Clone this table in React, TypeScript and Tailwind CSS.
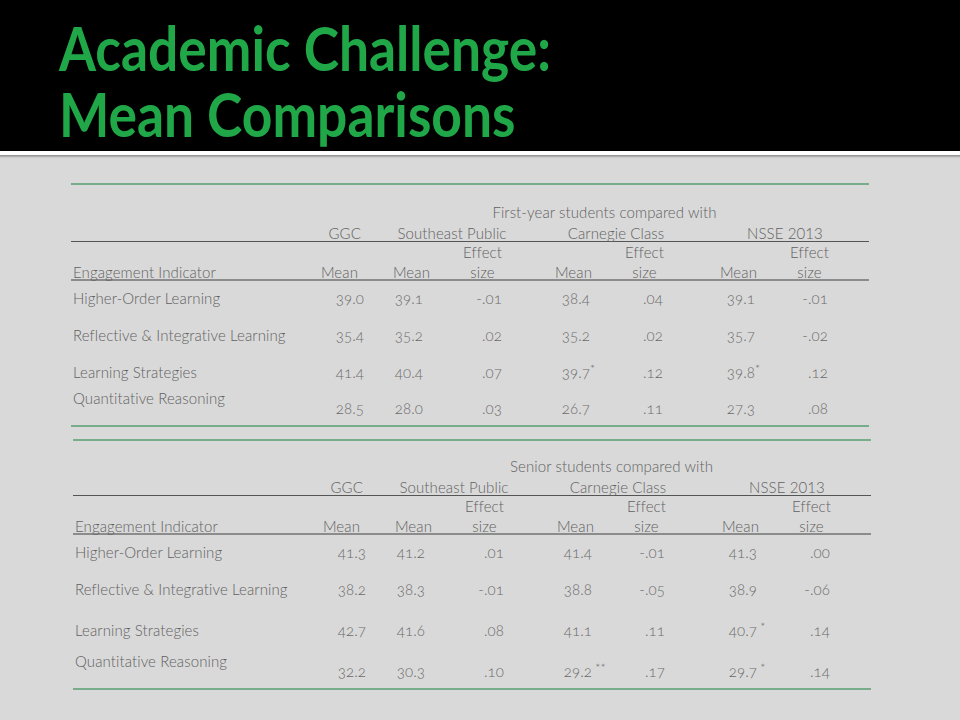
type Cell = { v: string; star?: string }

type Row = { label: string; cells: Cell[]; rowClass: string; split?: boolean }

const t1Rows: Row[] = [
  {
    label: "Higher-Order Learning",
    rowClass: "mt-[7px]",
    cells: [{ v: "39.0" }, { v: "39.1" }, { v: "-.01" }, { v: "38.4" }, { v: ".04" }, { v: "39.1" }, { v: "-.01" }],
  },
  {
    label: "Reflective & Integrative Learning",
    rowClass: "mt-[17px]",
    cells: [{ v: "35.4" }, { v: "35.2" }, { v: ".02" }, { v: "35.2" }, { v: ".02" }, { v: "35.7" }, { v: "-.02" }],
  },
  {
    label: "Learning Strategies",
    rowClass: "mt-[17px]",
    cells: [{ v: "41.4" }, { v: "40.4" }, { v: ".07" }, { v: "39.7", star: "*" }, { v: ".12" }, { v: "39.8", star: "*" }, { v: ".12" }],
  },
  {
    label: "Quantitative Reasoning",
    rowClass: "mt-[6px]",
    split: true,
    cells: [{ v: "28.5" }, { v: "28.0" }, { v: ".03" }, { v: "26.7" }, { v: ".11" }, { v: "27.3" }, { v: ".08" }],
  },
]

const t2Rows: Row[] = [
  {
    label: "Higher-Order Learning",
    rowClass: "mt-[7px]",
    cells: [{ v: "41.3" }, { v: "41.2" }, { v: ".01" }, { v: "41.4" }, { v: "-.01" }, { v: "41.3" }, { v: ".00" }],
  },
  {
    label: "Reflective & Integrative Learning",
    rowClass: "mt-[17px]",
    cells: [{ v: "38.2" }, { v: "38.3" }, { v: "-.01" }, { v: "38.8" }, { v: "-.05" }, { v: "38.9" }, { v: "-.06" }],
  },
  {
    label: "Learning Strategies",
    rowClass: "mt-[21px]",
    cells: [{ v: "42.7" }, { v: "41.6" }, { v: ".08" }, { v: "41.1" }, { v: ".11" }, { v: "40.7", star: " *" }, { v: ".14" }],
  },
  {
    label: "Quantitative Reasoning",
    rowClass: "mt-[11px]",
    split: true,
    cells: [{ v: "32.2" }, { v: "30.3" }, { v: ".10" }, { v: "29.2", star: " **" }, { v: ".17" }, { v: "29.7", star: " *" }, { v: ".14" }],
  },
]

// right padding of each value column
const dataPad = ["pr-[2px]", "pr-[9px]", "pr-[2px]", "pr-[4px]", "pr-[3px]", "pr-[4px]", "pr-[3px]"]

const cols = "grid grid-cols-[229px_66px_66px_72px_90px_72px_93px_72px]"

function EffectHead() {
  return (
    <div className="flex justify-end pr-[2px]">
      <div className="text-center">
        <div>Effect</div>
        <div>size</div>
      </div>
    </div>
  )
}

function DataRow({ row }: { row: Row }) {
  return (
    <div className={`${cols} leading-[20px] ${row.rowClass}`}>
      <div className="pl-[2px] whitespace-nowrap">{row.label}</div>
      {row.cells.map((c, i) => (
        <div
          key={i}
          className={`text-right whitespace-nowrap text-[#6b6b6b] oldstyle-nums ${dataPad[i]} ${row.split ? "pt-[10px]" : ""}`}
        >
          {c.v}
          {c.star && (
            <span className="inline-block w-0 text-left text-[12px] align-top leading-[14px] whitespace-pre">{c.star}</span>
          )}
        </div>
      ))}
    </div>
  )
}

function CompareTable({
  caption,
  rows,
  wrapClass,
  capClass,
  endClass,
}: {
  caption: string
  rows: Row[]
  wrapClass: string
  capClass: string
  endClass: string
}) {
  return (
    <div
      className={`w-[798px] border-t-2 border-b-2 border-[#77ad8b] text-[15px] tracking-[0.1px] font-light text-[#616161] ${wrapClass}`}
    >
      <div className={`text-center leading-[20px] ${capClass}`}>{caption}</div>
      <div className="mt-[3px] grid grid-cols-[235px_66px_160px_168px_170px] leading-[16px] border-b border-[#555] text-center">
        <div />
        <div className="text-right pr-[11px]">GGC</div>
        <div>Southeast Public</div>
        <div>Carnegie Class</div>
        <div>NSSE 2013</div>
      </div>
      <div className={`${cols} h-[39px] items-end leading-[20px] border-b-2 border-[#8c8c8c]`}>
        <div className="pl-[2px]">Engagement Indicator</div>
        <div className="text-right pr-[8px]">Mean</div>
        <div className="text-right pr-[2px]">Mean</div>
        <EffectHead />
        <div className="text-right pr-[2px]">Mean</div>
        <EffectHead />
        <div className="text-right pr-[2px]">Mean</div>
        <EffectHead />
      </div>
      {rows.map((r) => (
        <DataRow key={r.label} row={r} />
      ))}
      <div className={endClass} />
    </div>
  )
}

export default function App() {
  return (
    <div className="w-[960px] h-[720px] overflow-hidden bg-[#d9d9d9] font-[Lato,'Liberation_Sans',sans-serif]">
      {/* title band */}
      <div className="h-[151px] bg-black pl-[59px] pt-[14px]">
        <h1 className="w-[600px] origin-left scale-x-[0.86] text-[62px] leading-[66px] font-bold text-[#20a848]">
          Academic Challenge: Mean Comparisons
        </h1>
      </div>
      <div className="h-[4px] bg-white" />
      <div className="h-[3px] bg-gradient-to-b from-[#8a8a8a] to-[#d9d9d9]" />

      <CompareTable
        caption="First-year students compared with"
        rows={t1Rows}
        wrapClass="mt-[25px] ml-[71px]"
        capClass="mt-[17px] pl-[269px]"
        endClass="h-[7px]"
      />
      <CompareTable
        caption="Senior students compared with"
        rows={t2Rows}
        wrapClass="mt-[12px] ml-[73px]"
        capClass="mt-[15px] pl-[279px]"
        endClass="h-[7px]"
      />
    </div>
  )
}
